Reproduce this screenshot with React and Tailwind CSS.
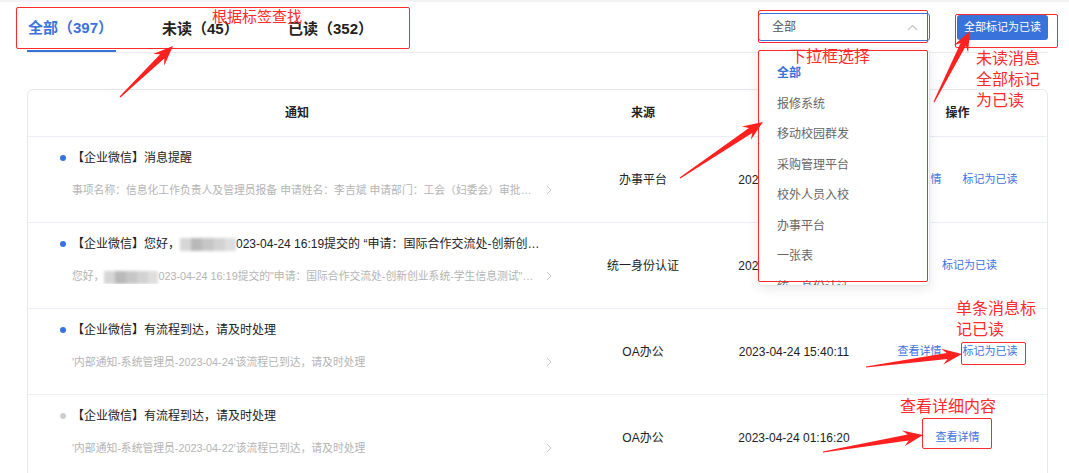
import React from 'react';

const BLUE = 'text-[#3a72dc]';

const rows = [
  {
    unread: true,
    title: ['【企业微信】消息提醒'],
    sub: ['事项名称：信息化工作负责人及管理员报备 申请姓名：李吉斌 申请部门：工会（妇委会）审批人：张老师 审批状态：待审批'],
    source: '办事平台',
    time: '2023-04-24 16:20:05',
    actions: ['查看详情', '标记为已读'],
  },
  {
    unread: true,
    title: ['【企业微信】您好，', 'blur', '023-04-24 16:19提交的 “申请：国际合作交流处-创新创业系统-学生信息测试”目前已审批'],
    sub: ['您好，', 'blur', '023-04-24 16:19提交的"申请：国际合作交流处-创新创业系统-学生信息测试"目前已审批通过'],
    source: '统一身份认证',
    time: '2023-04-24 16:19:40',
    actions: ['标记为已读'],
    shift: true,
  },
  {
    unread: true,
    title: ['【企业微信】有流程到达，请及时处理'],
    sub: ["'内部通知-系统管理员-2023-04-24'该流程已到达，请及时处理"],
    source: 'OA办公',
    time: '2023-04-24 15:40:11',
    actions: ['查看详情', '标记为已读'],
  },
  {
    unread: false,
    title: ['【企业微信】有流程到达，请及时处理'],
    sub: ["'内部通知-系统管理员-2023-04-22'该流程已到达，请及时处理"],
    source: 'OA办公',
    time: '2023-04-24 01:16:20',
    actions: ['查看详情'],
  },
];

const options = ['全部', '报修系统', '移动校园群发', '采购管理平台', '校外人员入校', '办事平台', '一张表', '统一身份认证'];

// mosaic used to hide a name in the screenshot
const Blur = ({ w }) => (
  <span className="inline-flex align-middle h-[13px] blur-[1.5px]" style={{ width: w }}>
    <span className="flex-1 bg-[#d6d6d6]" />
    <span className="flex-1 bg-[#b9b9b9]" />
    <span className="flex-1 bg-[#c6c6c6]" />
    <span className="flex-1 bg-[#d2d2d2]" />
    <span className="flex-1 bg-[#dedede]" />
  </span>
);

const Parts = ({ parts, blurW }) =>
  parts.map((p, i) => (p === 'blur' ? <Blur key={i} w={blurW} /> : <span key={i}>{p}</span>));

const Chevron = () => (
  <svg width="6" height="10" viewBox="0 0 6 10" className="shrink-0">
    <path d="M1 1l4 4-4 4" fill="none" stroke="#c4c7cc" strokeWidth="1" />
  </svg>
);

// red hand-drawn style arrow from tail to tip
const arrowPoints = (tx, ty, px, py) => {
  const dx = px - tx;
  const dy = py - ty;
  const len = Math.hypot(dx, dy);
  const ux = dx / len;
  const uy = dy / len;
  const nx = -uy;
  const ny = ux;
  const head = 20;
  const bx = px - ux * head;
  const by = py - uy * head;
  const nb = px - ux * (head - 5);
  const nby = py - uy * (head - 5);
  const pts = [
    [tx + nx * 0.6, ty + ny * 0.6],
    [nb + nx * 3, nby + ny * 3],
    [bx + nx * 8, by + ny * 8],
    [px, py],
    [bx - nx * 8, by - ny * 8],
    [nb - nx * 3, nby - ny * 3],
    [tx - nx * 0.6, ty - ny * 0.6],
  ];
  return pts.map((p) => p.join(',')).join(' ');
};

const arrows = [
  [120, 97, 173, 46],
  [680, 178, 763, 122],
  [934, 102, 970, 31],
  [866, 367, 962, 354],
  [823, 452, 923, 435],
];

const App = () => {
  return (
    <div className="relative w-[1069px] h-[473px] overflow-hidden bg-white font-['Liberation_Sans','Noto_Sans_CJK_SC',sans-serif] text-[#222]">
      <div className="h-[2px] bg-[#f2f3f5]" />

      <div className="pl-[27px] pr-[21px]">
        {/* tabs + filters */}
        <div className="flex justify-between border-b border-[#e8eaee] h-[51px]">
          <div className="flex text-[15px] font-bold">
            <div className="w-[89px] h-[50px] pt-[4px] pl-[1px] flex items-center border-b-2 border-[#3a72dc] text-[#3a72dc] whitespace-nowrap">
              全部（397）
            </div>
            <div className="ml-[46px] w-[126px] h-[50px] pt-[4px] flex items-center whitespace-nowrap">未读（45）</div>
            <div className="h-[50px] pt-[4px] flex items-center whitespace-nowrap">已读（352）</div>
          </div>

          <div className="flex items-start gap-[27px] pt-[11px]">
            <div className="w-[172px] h-[28px] border border-[#3a72dc] rounded-[3px] flex items-center justify-between pl-[13px] pr-[11px] text-[12px] text-[#555]">
              <span>全部</span>
              <svg width="11" height="7" viewBox="0 0 11 7">
                <path d="M1 6l4.5-4.5L10 6" fill="none" stroke="#c0c4cc" strokeWidth="1.2" />
              </svg>
            </div>
            <button className="mt-[2px] w-[91px] h-[25px] rounded-[3px] bg-[#3a72dc] text-white text-[11px]">
              全部标记为已读
            </button>
          </div>
        </div>

        {/* table */}
        <div className="mt-[36px] border border-[#e4e7ed] rounded-[6px]">
          <div className="grid grid-cols-[538px_154px_148px_1fr] h-[47px] items-center border-b border-[#ebeef5] text-[12px] font-bold text-center">
            <div>通知</div>
            <div>来源</div>
            <div>时间</div>
            <div>操作</div>
          </div>

          {rows.map((r, i) => (
            <div
              key={i}
              className="grid grid-cols-[538px_154px_148px_1fr] h-[86px] items-center border-b border-[#ebeef5]"
            >
              <div className="pl-[32px] h-full pt-[13px]">
                <div className="flex items-center h-[16px] w-[490px]">
                  <span className={`w-[6px] h-[6px] rounded-full shrink-0 ${r.unread ? 'bg-[#3a72dc]' : 'bg-[#cfcfcf]'}`} />
                  <span className="ml-[6px] text-[12px] truncate">
                    <Parts parts={r.title} blurW={56} />
                  </span>
                </div>
                <div className="mt-[16px] ml-[12px] w-[480px] h-[16px] flex items-center justify-between gap-[6px] text-[10.8px] text-[#b4b4b4]">
                  <span className="truncate">
                    <Parts parts={r.sub} blurW={54} />
                  </span>
                  <Chevron />
                </div>
              </div>
              <div className="text-center text-[12px]">{r.source}</div>
              <div className="text-center text-[12px]">{r.time}</div>
              <div className={`flex justify-center gap-[21px] text-[11px] ${BLUE} ${r.shift ? 'pl-[24px]' : ''}`}>
                {r.actions.map((a) => (
                  <span key={a}>{a}</span>
                ))}
              </div>
            </div>
          ))}
        </div>
      </div>

      {/* opened select list */}
      <div className="absolute left-[758px] top-[50px] w-[172px] h-[236px] overflow-hidden bg-white rounded-[4px] border border-[#e4e7ed] shadow-[0_2px_12px_rgba(0,0,0,0.1)] pt-[7px]">
        {options.map((o, i) => (
          <div
            key={o}
            className={`h-[30.5px] flex items-center pl-[18px] text-[12px] ${i === 0 ? 'text-[#3a72dc] font-bold' : 'text-[#666]'}`}
          >
            {o}
          </div>
        ))}
      </div>

      {/* annotation boxes */}
      <div className="absolute left-[16px] top-[7px] w-[394px] h-[42px] border border-[#ff2a2a] rounded-[2px]" />
      <div className="absolute left-[758px] top-[10px] w-[170px] h-[33px] border border-[#ff2a2a] rounded-[2px]" />
      <div className="absolute left-[758px] top-[50px] w-[170px] h-[232px] border border-[#ff2a2a] rounded-[2px]" />
      <div className="absolute left-[955px] top-[14px] w-[103px] h-[34px] border border-[#ff2a2a] rounded-[2px]" />
      <div className="absolute left-[961px] top-[342px] w-[65px] h-[23px] border border-[#ff2a2a] rounded-[2px]" />
      <div className="absolute left-[922px] top-[418px] w-[70px] h-[31px] border border-[#ff2a2a] rounded-[2px]" />

      {/* annotation texts */}
      <div className="absolute left-[212px] top-[7px] text-[15px] leading-[20px] text-[#ff2a2a]">根据标签查找</div>
      <div className="absolute left-[790px] top-[47px] text-[16px] leading-[20px] text-[#ff2a2a]">下拉框选择</div>
      <div className="absolute left-[976px] top-[48px] text-[16px] leading-[21px] text-[#ff2a2a]">
        未读消息
        <br />
        全部标记
        <br />
        为已读
      </div>
      <div className="absolute left-[956px] top-[298px] text-[16px] leading-[21px] text-[#ff2a2a]">
        单条消息标
        <br />
        记已读
      </div>
      <div className="absolute left-[900px] top-[397px] text-[16px] leading-[20px] text-[#ff2a2a]">查看详细内容</div>

      <svg className="absolute inset-0 pointer-events-none" width="1069" height="473">
        {arrows.map((a, i) => (
          <polygon key={i} points={arrowPoints(...a)} fill="#ff2020" />
        ))}
      </svg>
    </div>
  );
};

export default App;
